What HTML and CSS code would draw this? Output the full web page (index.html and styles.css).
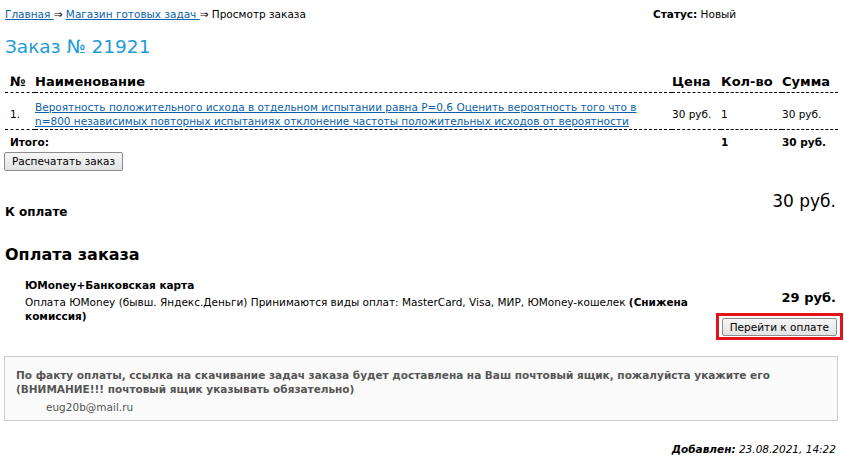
FILE: index.html
```html
<!DOCTYPE html>
<html lang="ru">
<head>
<meta charset="utf-8">
<title>Просмотр заказа</title>
<link rel="stylesheet" href="styles.css">
</head>
<body>
<div class="page">
  <div class="topbar">
    <div class="crumbs"><a href="#">Главная </a>&rArr; <a href="#">Магазин готовых задач </a>&rArr; Просмотр заказа</div>
    <div class="status"><b>Статус:</b> Новый</div>
  </div>
  <h1 class="title">Заказ № 21921</h1>
  <table class="order">
    <thead>
      <tr><th class="c-num">№</th><th class="c-name">Наименование</th><th class="c-price">Цена</th><th class="c-qty">Кол-во</th><th class="c-sum">Сумма</th></tr>
    </thead>
    <tbody>
      <tr class="item"><td class="c-num">1.</td><td class="c-name"><a href="#">Вероятность положительного исхода в отдельном испытании равна P=0,6 Оценить вероятность того что в n=800 независимых повторных испытаниях отклонение частоты положительных исходов от вероятности</a></td><td class="c-price">30 руб.</td><td class="c-qty">1</td><td class="c-sum">30 руб.</td></tr>
      <tr class="total"><td colspan="2" class="c-num">Итого:</td><td></td><td class="c-qty">1</td><td class="c-sum">30 руб.</td></tr>
    </tbody>
  </table>
  <button class="btn print">Распечатать заказ</button>
  <div class="topay">
    <div class="topay-label">К оплате</div>
    <div class="topay-sum">30 руб.</div>
  </div>
  <h2 class="pay-title">Оплата заказа</h2>
  <div class="method">
    <div class="method-info">
      <div class="method-name">ЮMoney+Банковская карта</div>
      <div class="method-desc">Оплата ЮMoney (бывш. Яндекс.Деньги) Принимаются виды оплат: MasterCard, Visa, МИР, ЮMoney-кошелек <b>(Снижена комиссия)</b></div>
    </div>
    <div class="method-side">
      <div class="method-sum">29 руб.</div>
      <div class="highlight"><button class="btn">Перейти к оплате</button></div>
    </div>
  </div>
  <div class="notice">
    <div class="notice-text">По факту оплаты, ссылка на скачивание задач заказа будет доставлена на Ваш почтовый ящик, пожалуйста укажите его (ВНИМАНИЕ!!! почтовый ящик указывать обязательно)</div>
    <div class="notice-mail">eug20b@mail.ru</div>
  </div>
  <div class="added"><b>Добавлен:</b> 23.08.2021, 14:22</div>
</div>
</body>
</html>
```
FILE: styles.css
```css
html, body {
  margin: 0;
  padding: 0;
  background: #fff;
}
body {
  font-family: "DejaVu Sans", Verdana, sans-serif;
  font-size: 10.5px;
  color: #000;
}
.page {
  padding: 7px 6px 0 5px;
}
a {
  color: #0b5fab;
}
.topbar {
  display: flex;
  line-height: 14px;
}
.crumbs {
  flex: 1;
}
.status {
  width: 185px;
}
.title {
  margin: 14px 0 0 0;
  font-size: 18.5px;
  font-weight: normal;
  line-height: 24px;
  color: #1d9bd7;
}
.order {
  width: 100%;
  border-collapse: collapse;
  margin-top: 12px;
}
.order th {
  font-size: 13px;
  font-weight: bold;
  text-align: left;
  padding: 3px 0 2px 0;
  border-bottom: 1px dashed #000;
  line-height: 16px;
}
.order td {
  vertical-align: middle;
  padding: 0;
  line-height: 14px;
}
.c-num {
  width: 25px;
  padding-left: 5px !important;
}
.c-price { width: 49px; }
.c-qty { width: 61px; }
.c-sum { width: 56px; }
.item td {
  padding-top: 7px;
  padding-bottom: 1px;
  border-bottom: 1px dashed #000;
}
.total td {
  font-weight: bold;
  padding-top: 5px;
  padding-bottom: 2px;
}
.btn {
  font-family: "DejaVu Sans", Verdana, sans-serif;
  font-size: 10.5px;
  color: #000;
  background: linear-gradient(#f6f6f6, #e2e2e2);
  border: 1px solid #8c8c8c;
  border-radius: 2px;
  height: 19px;
  padding: 0 7px;
  line-height: 15px;
}
.print {
  margin-top: 1px;
  margin-left: -1px;
}
.topay {
  display: flex;
  justify-content: space-between;
  align-items: flex-end;
  margin-top: 19px;
}
.topay-label {
  font-size: 12px;
  font-weight: bold;
  line-height: 16px;
  margin-bottom: -8px;
}
.topay-sum {
  font-size: 17px;
  line-height: 22px;
  margin-right: 2px;
}
.pay-title {
  font-size: 16px;
  line-height: 20px;
  margin: 33px 0 0 0;
}
.method {
  display: flex;
  margin-top: 13px;
  padding-left: 20px;
}
.method-info {
  flex: 1;
}
.method-name {
  font-weight: bold;
  line-height: 14px;
}
.method-desc {
  margin-top: 3px;
  line-height: 14px;
}
.method-side {
  display: flex;
  flex-direction: column;
  align-items: flex-end;
  padding-top: 12px;
}
.method-sum {
  font-size: 13px;
  font-weight: bold;
  line-height: 16px;
  margin-right: 2px;
}
.highlight {
  margin-top: 7px;
  border: 3px solid #e3131b;
  padding: 2px 3px 1px 3px;
  margin-right: -5px;
}
.highlight .btn {
  height: 18px;
  display: block;
}
.notice {
  margin-top: 16px;
  background: #fafafa;
  border: 1px solid #cccccc;
  padding: 11px 11px 5px 11px;
  color: #555;
  margin-left: -1px;
}
.notice-text {
  font-weight: bold;
  line-height: 14px;
}
.notice-mail {
  margin-top: 3px;
  padding-left: 30px;
  line-height: 16px;
}
.added {
  text-align: right;
  font-style: italic;
  margin-top: 21px;
  margin-right: 2px;
  line-height: 14px;
}
```
